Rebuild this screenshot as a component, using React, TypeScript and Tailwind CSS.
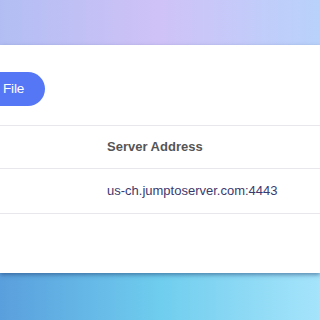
import React from 'react';

const rows = [{ name: '', address: 'us-ch.jumptoserver.com:4443' }];

export default function App() {
    return (
        <div className="flex h-[320px] w-[320px] flex-col overflow-hidden font-['Liberation_Sans',Arial,sans-serif]">
            {/* top backdrop */}
            <div className="h-[45px] shrink-0 bg-gradient-to-r from-[#b2bef3] via-[#cfc2f7] to-[#b8d2fb]" />
            {/* card */}
            <div className="relative z-10 flex h-[228px] shrink-0 flex-col bg-white shadow-[0_2px_4px_rgba(30,60,110,0.5)]">
                <div className="flex h-[80px] items-start pt-[27px]">
                    <button className="ml-[-60px] flex h-[34px] w-[105px] items-center justify-end rounded-full bg-[#5577f6] pr-[21px] text-[13.5px] tracking-[-0.2px] text-white">
                        <span>Upload File</span>
                    </button>
                </div>
                <div className="grid grid-cols-[107px_1fr] border-y border-[#e8e8ec] text-[13px]">
                    <div className="h-[42px]" />
                    <div className="flex h-[42px] items-center font-bold text-[#555555]">Server Address</div>
                </div>
                {rows.map((row) => (
                    <div key={row.address} className="grid grid-cols-[107px_1fr] border-b border-[#e8e8ec] text-[13px]">
                        <div className="h-[44px]">{row.name}</div>
                        <div className="flex h-[44px] items-center text-[#3a3a6e]">{row.address}</div>
                    </div>
                ))}
            </div>
            {/* bottom backdrop */}
            <div className="flex-1 bg-gradient-to-r from-[#5a9fdd] via-[#6fcdee] to-[#a5e4fb]" />
        </div>
    );
}
